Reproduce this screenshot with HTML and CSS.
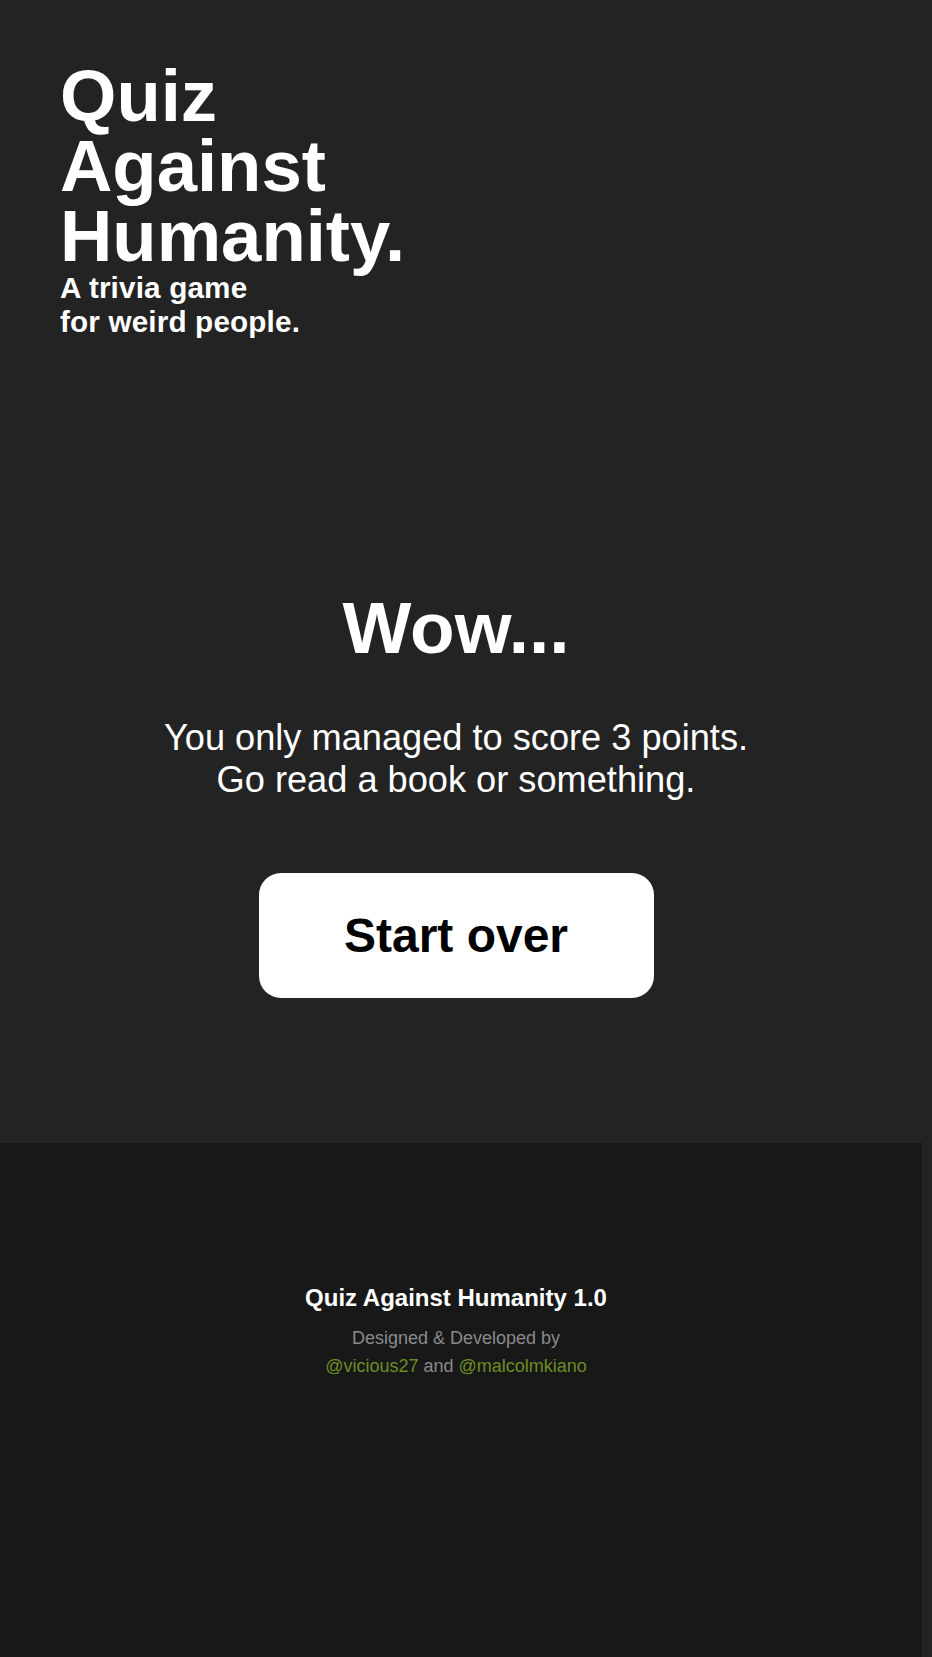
FILE: index.html
```html
<!DOCTYPE html>
<html lang="en">
<head>
<meta charset="utf-8">
<title>Quiz Against Humanity</title>
<link rel="stylesheet" href="styles.css">
</head>
<body>
<div class="page">
  <header class="masthead">
    <h1 class="brand">Quiz<br>Against<br>Humanity.</h1>
    <p class="tagline">A trivia game<br>for weird people.</p>
  </header>
  <main class="result">
    <h2 class="result-title">Wow...</h2>
    <p class="result-text">You only managed to score 3 points.<br>Go read a book or something.</p>
    <button class="restart" type="button">Start over</button>
  </main>
</div>
<footer class="footer">
  <div class="footer-inner">
    <h3 class="footer-title">Quiz Against Humanity 1.0</h3>
    <p class="credits">Designed &amp; Developed by<br><a href="#" class="handle">@vicious27</a> and <a href="#" class="handle">@malcolmkiano</a></p>
  </div>
</footer>
</body>
</html>
```

FILE: styles.css
```css
html {
  background: #232323;
}
body {
  margin: 0;
  background: #232323;
  font-family: "Liberation Sans", Arial, sans-serif;
  color: #ffffff;
}
.page {
  width: 912px;
  height: 1143px;
  display: flex;
  flex-direction: column;
}
.masthead {
  padding: 61px 0 0 60px;
}
.brand {
  margin: 0;
  font-size: 72.5px;
  line-height: 70px;
  font-weight: 700;
}
.tagline {
  margin: 0;
  font-size: 29.7px;
  line-height: 33.5px;
  font-weight: 700;
  letter-spacing: 0.15px;
}
.result {
  display: flex;
  flex-direction: column;
  align-items: center;
  padding-top: 247px;
}
.result-title {
  margin: 0;
  font-size: 73px;
  line-height: 86px;
  font-weight: 700;
}
.result-text {
  margin: 46px 0 0;
  font-size: 36.2px;
  line-height: 42px;
  text-align: center;
}
.restart {
  margin-top: 72px;
  width: 395px;
  height: 125px;
  border: none;
  border-radius: 22px;
  background: #ffffff;
  color: #000000;
  font-family: "Liberation Sans", Arial, sans-serif;
  font-size: 48px;
  font-weight: 700;
  display: flex;
  align-items: center;
  justify-content: center;
  cursor: pointer;
}
.footer {
  width: 922px;
  height: 514px;
  background: #181818;
}
.footer-inner {
  width: 912px;
  padding-top: 140px;
  text-align: center;
}
.footer-title {
  margin: 0;
  font-size: 24px;
  line-height: 30px;
  font-weight: 700;
  color: #ffffff;
}
.credits {
  margin: 11px 0 0;
  font-size: 18px;
  line-height: 28px;
  color: #8a8a8a;
}
.handle {
  color: #6b8e23;
  text-decoration: none;
}
```
